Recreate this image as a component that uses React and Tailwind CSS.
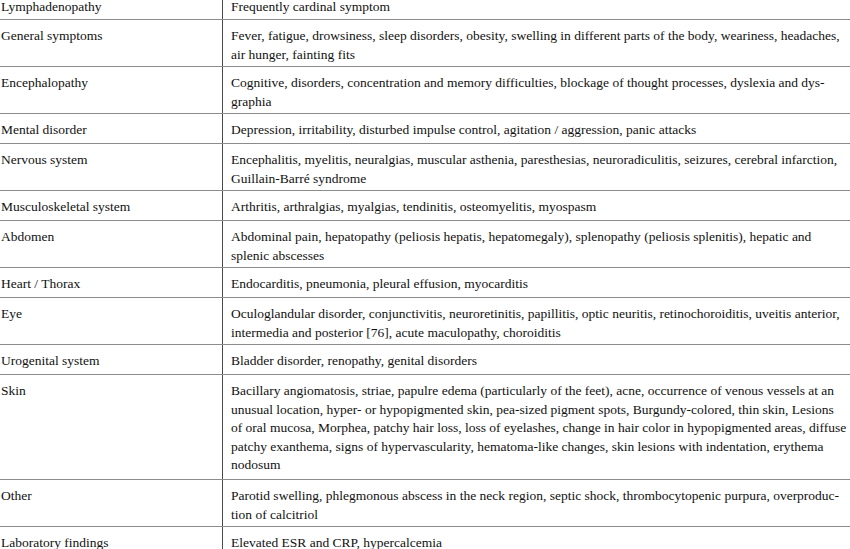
const rows = [
  { label: "Lymphadenopathy", h: "h-[19px]", pt: "pt-0 leading-[13px]", lines: ["Frequently cardinal symptom"] },
  {
    label: "General symptoms",
    h: "h-[47px]",
    lines: [
      "Fever, fatigue, drowsiness, sleep disorders, obesity, swelling in different parts of the body, weariness, headaches,",
      "air hunger, fainting fits",
    ],
  },
  {
    label: "Encephalopathy",
    h: "h-[47px]",
    lines: [
      "Cognitive, disorders, concentration and memory difficulties, blockage of thought processes, dyslexia and dys-",
      "graphia",
    ],
  },
  {
    label: "Mental disorder",
    h: "h-[30px]",
    lines: ["Depression, irritability, disturbed impulse control, agitation / aggression, panic attacks"],
  },
  {
    label: "Nervous system",
    h: "h-[47px]",
    lines: [
      "Encephalitis, myelitis, neuralgias, muscular asthenia, paresthesias, neuroradiculitis, seizures, cerebral infarction,",
      "Guillain-Barré syndrome",
    ],
  },
  {
    label: "Musculoskeletal system",
    h: "h-[30px]",
    lines: ["Arthritis, arthralgias, myalgias, tendinitis, osteomyelitis, myospasm"],
  },
  {
    label: "Abdomen",
    h: "h-[47px]",
    lines: [
      "Abdominal pain, hepatopathy (peliosis hepatis, hepatomegaly), splenopathy (peliosis splenitis), hepatic and",
      "splenic abscesses",
    ],
  },
  {
    label: "Heart / Thorax",
    h: "h-[30px]",
    lines: ["Endocarditis, pneumonia, pleural effusion, myocarditis"],
  },
  {
    label: "Eye",
    h: "h-[47px]",
    lines: [
      "Oculoglandular disorder, conjunctivitis, neuroretinitis, papillitis, optic neuritis, retinochoroiditis, uveitis anterior,",
      "intermedia and posterior [76], acute maculopathy, choroiditis",
    ],
  },
  {
    label: "Urogenital system",
    h: "h-[30px]",
    lines: ["Bladder disorder, renopathy, genital disorders"],
  },
  {
    label: "Skin",
    h: "h-[105px]",
    lines: [
      "Bacillary angiomatosis, striae, papulre edema (particularly of the feet), acne, occurrence of venous vessels at an",
      "unusual location, hyper- or hypopigmented skin, pea-sized pigment spots, Burgundy-colored, thin skin, Lesions",
      "of oral mucosa, Morphea, patchy hair loss, loss of eyelashes, change in hair color in hypopigmented areas, diffuse",
      "patchy exanthema, signs of hypervascularity, hematoma-like changes, skin lesions with indentation, erythema",
      "nodosum",
    ],
  },
  {
    label: "Other",
    h: "h-[47px]",
    lines: [
      "Parotid swelling, phlegmonous abscess in the neck region, septic shock, thrombocytopenic purpura, overproduc-",
      "tion of calcitriol",
    ],
  },
  {
    label: "Laboratory findings",
    h: "h-[30px]",
    lines: ["Elevated ESR and CRP, hypercalcemia"],
  },
];

export default function App() {
  return (
    <div className="h-[549px] w-[850px] overflow-hidden bg-white font-['Liberation_Serif',serif] text-[13.5px] leading-[18.5px] text-[#111]">
      {rows.map((row, i) => (
        <div
          key={row.label}
          className={`grid grid-cols-[223px_1fr] ${row.h} ${i > 0 ? "border-t border-[#8c8c8c]" : ""}`}
        >
          <div className={`border-r border-[#4a4a4a] pl-px ${row.pt || "pt-[7px]"} whitespace-nowrap`}>
            {row.label}
          </div>
          <div className={`pl-[8px] ${row.pt || "pt-[7px]"}`}>
            {row.lines.map((line) => (
              <div key={line} className="whitespace-nowrap">
                {line}
              </div>
            ))}
          </div>
        </div>
      ))}
    </div>
  );
}
